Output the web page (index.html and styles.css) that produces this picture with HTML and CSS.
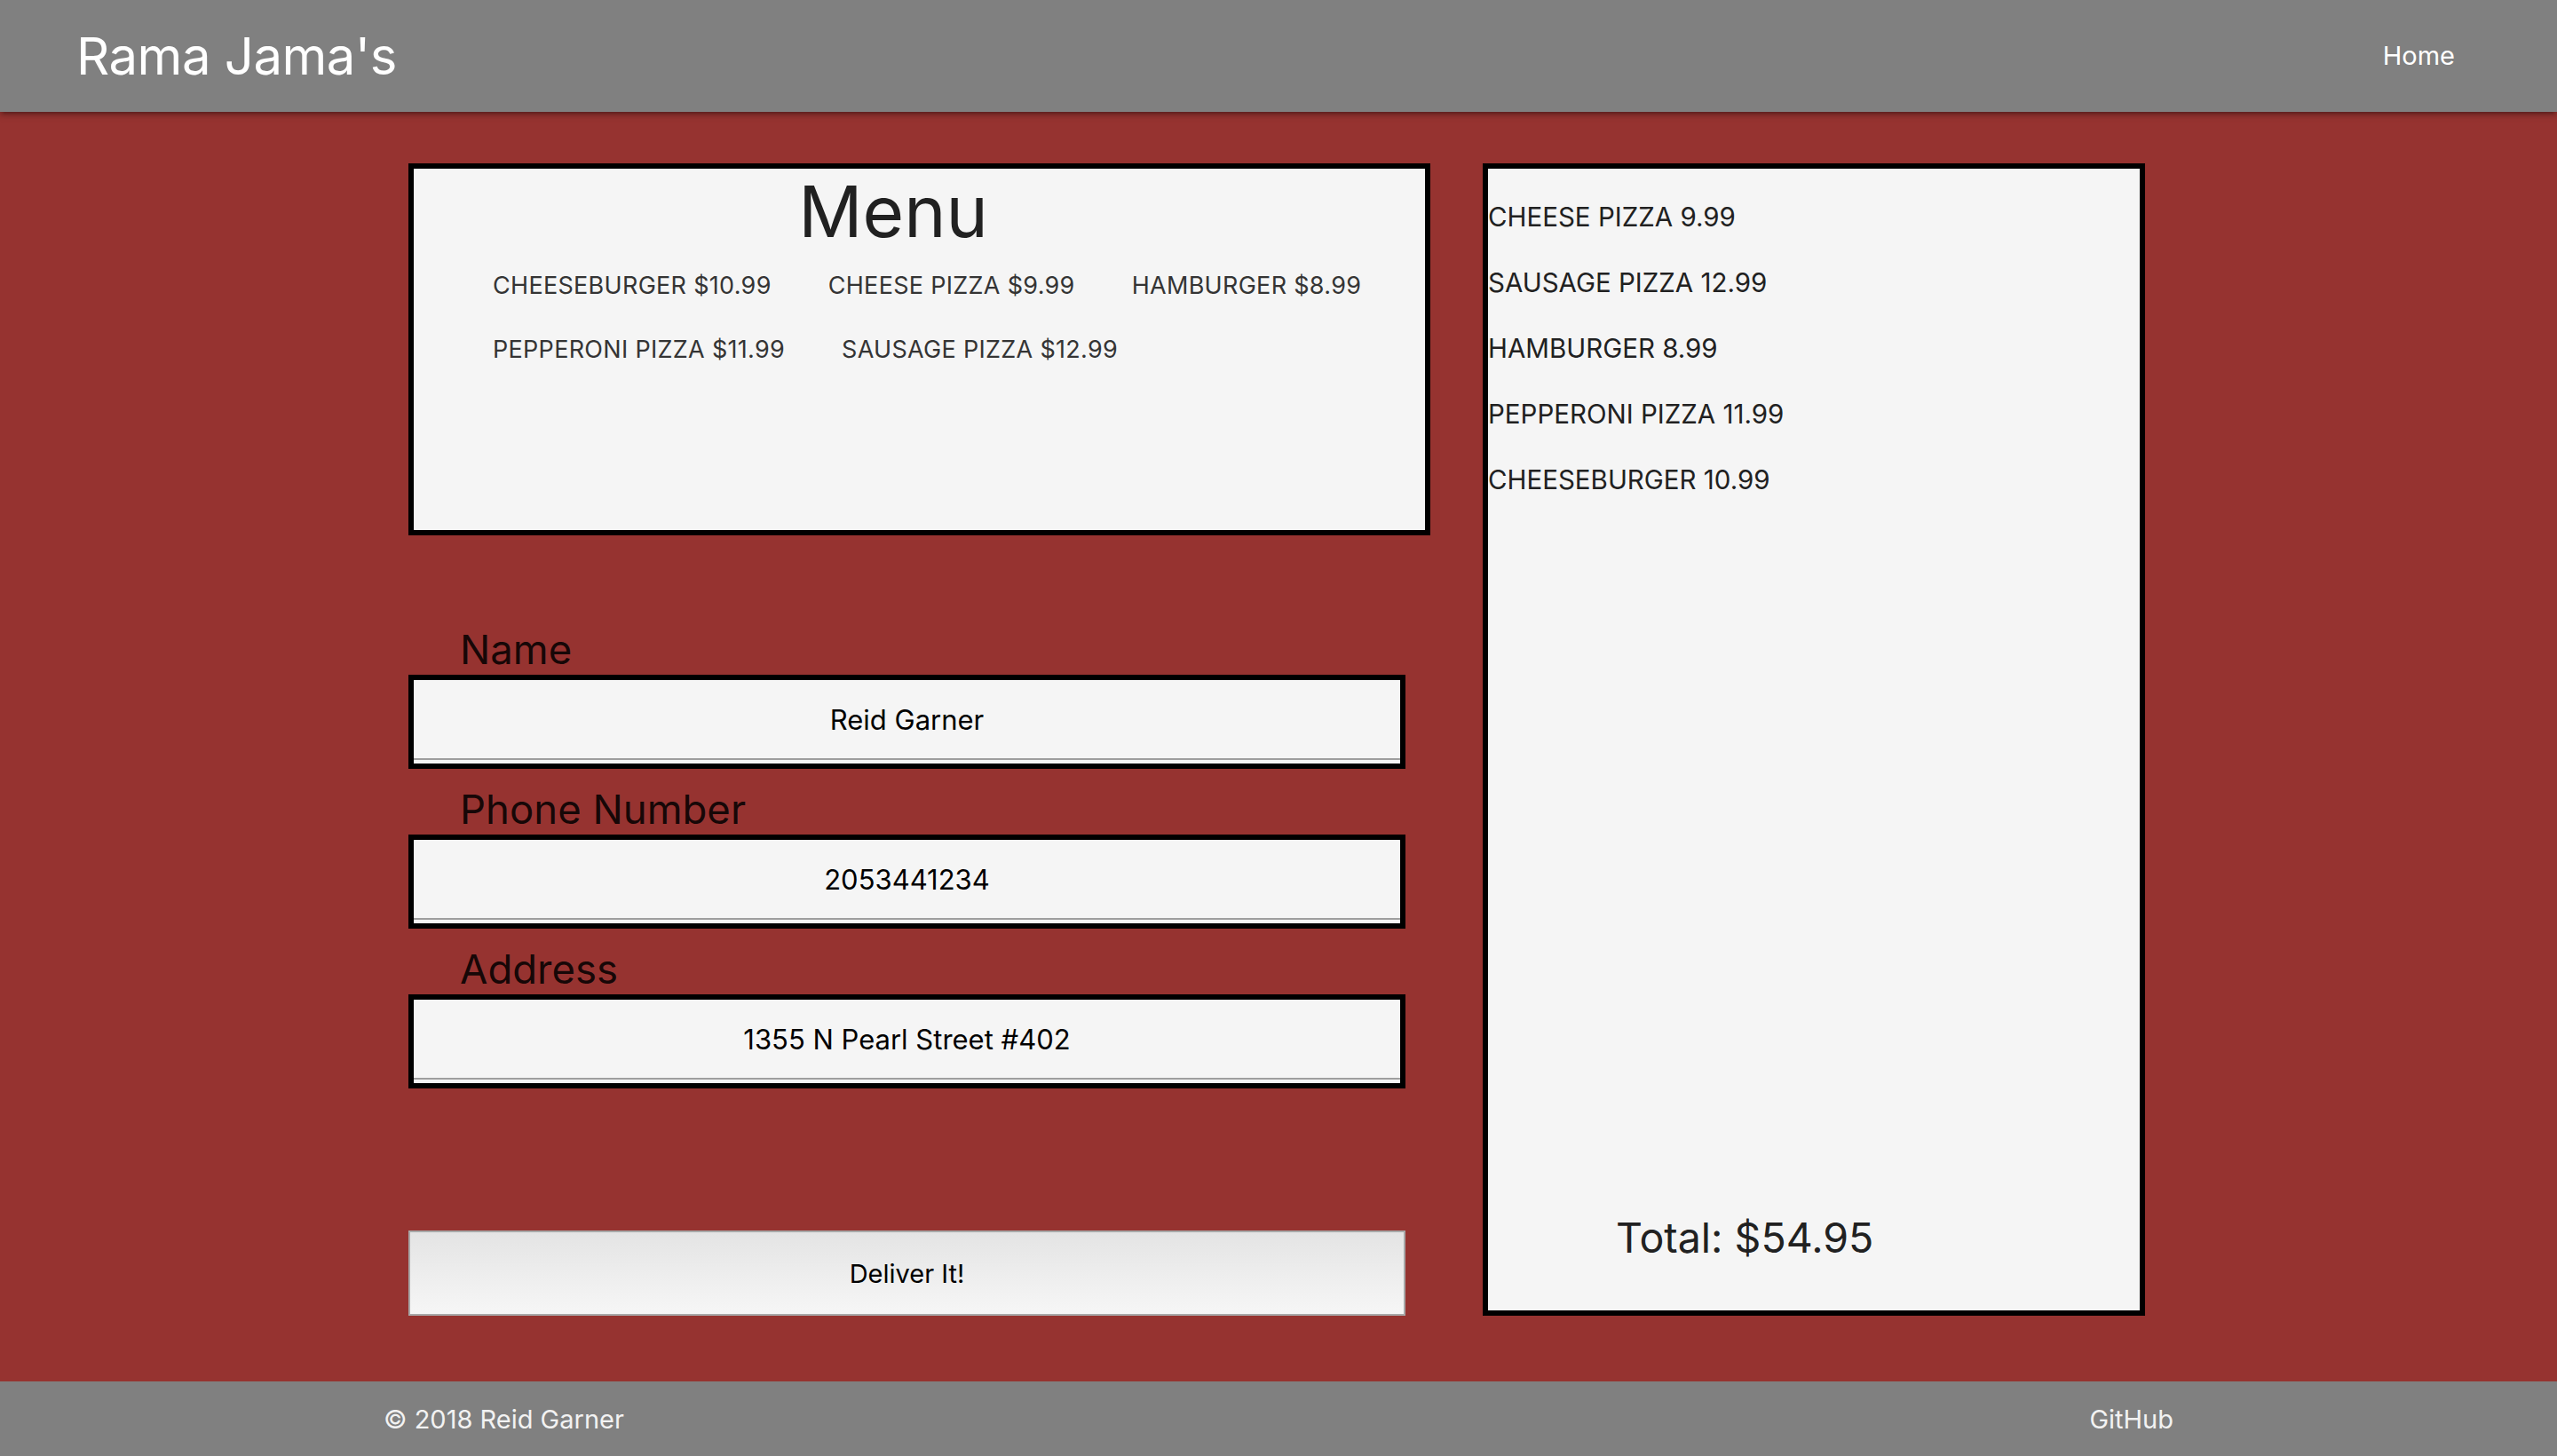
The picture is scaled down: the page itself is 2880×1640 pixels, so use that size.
FILE: index.html
```html
<!DOCTYPE html>
<html lang="en">
<head>
<meta charset="utf-8">
<title>Rama Jama's</title>
<link rel="stylesheet" href="styles.css">
</head>
<body>
<header class="nav">
  <a class="brand" href="#">Rama Jama's</a>
  <ul class="nav-links">
    <li><a class="nav-link" href="#">Home</a></li>
  </ul>
</header>
<main class="main">
  <div class="content">
    <div class="left">
      <section class="menu-box">
        <h3 class="menu-title">Menu</h3>
        <div class="menu-items">
          <a class="menu-item" href="#">CHEESEBURGER $10.99</a>
          <a class="menu-item" href="#">CHEESE PIZZA $9.99</a>
          <a class="menu-item" href="#">HAMBURGER $8.99</a>
          <a class="menu-item" href="#">PEPPERONI PIZZA $11.99</a>
          <a class="menu-item" href="#">SAUSAGE PIZZA $12.99</a>
        </div>
      </section>
      <form class="order-form">
        <div class="field">
          <label class="field-label" for="name">Name</label>
          <div class="field-box"><input class="field-input" id="name" type="text" value="Reid Garner"></div>
        </div>
        <div class="field">
          <label class="field-label" for="phone">Phone Number</label>
          <div class="field-box"><input class="field-input" id="phone" type="text" value="2053441234"></div>
        </div>
        <div class="field">
          <label class="field-label" for="address">Address</label>
          <div class="field-box"><input class="field-input" id="address" type="text" value="1355 N Pearl Street #402"></div>
        </div>
        <button class="deliver-btn" type="button">Deliver It!</button>
      </form>
    </div>
    <aside class="order-box">
      <div class="order-list">
        <p class="order-item">CHEESE PIZZA 9.99</p>
        <p class="order-item">SAUSAGE PIZZA 12.99</p>
        <p class="order-item">HAMBURGER 8.99</p>
        <p class="order-item">PEPPERONI PIZZA 11.99</p>
        <p class="order-item">CHEESEBURGER 10.99</p>
      </div>
      <h5 class="order-total">Total: $54.95</h5>
    </aside>
  </div>
</main>
<footer class="footer">
  <div class="footer-inner">
    <span class="copyright">© 2018 Reid Garner</span>
    <a class="footer-link" href="#">GitHub</a>
  </div>
</footer>
</body>
</html>
```

FILE: styles.css
```css
* {
  box-sizing: border-box;
}

html, body {
  margin: 0;
  padding: 0;
}

body {
  font-family: Inter, Roboto, "Liberation Sans", sans-serif;
  color: rgba(0, 0, 0, 0.87);
  width: 2880px;
  height: 1640px;
  display: flex;
  flex-direction: column;
  overflow: hidden;
}

a {
  text-decoration: none;
}

/* ---------- nav ---------- */
.nav {
  position: relative;
  z-index: 2;
  height: 126px;
  flex: 0 0 126px;
  background: #808080;
  display: flex;
  align-items: center;
  justify-content: space-between;
  padding: 0 85px 0 86px;
  box-shadow: 0 4px 4px 0 rgba(0, 0, 0, 0.14), 0 6px 2px -4px rgba(0, 0, 0, 0.12), 0 2px 10px 0 rgba(0, 0, 0, 0.2);
}

.brand {
  color: #ffffff;
  font-size: 58px;
  line-height: 126px;
  letter-spacing: -0.5px;
}

.nav-links {
  list-style: none;
  margin: 0;
  padding: 0;
  display: flex;
}

.nav-link {
  display: block;
  color: #ffffff;
  font-size: 29px;
  line-height: 126px;
  padding: 0 30px;
}

/* ---------- main ---------- */
.main {
  flex: 1 1 auto;
  background: #963330;
  padding: 58px 0 74px;
}

.content {
  width: 2016px;
  margin: 0 auto;
  display: flex;
  align-items: stretch;
}

.left {
  margin-left: 28px;
  width: 1151px;
  display: flex;
  flex-direction: column;
}

.menu-box {
  height: 419px;
  border: 6px solid #000;
  background: #f5f5f5;
}

.menu-title {
  margin: 0;
  padding-right: 59px;
  text-align: center;
  font-size: 80px;
  font-weight: 400;
  line-height: 96px;
  color: #212121;
}

.menu-items {
  display: flex;
  flex-wrap: wrap;
  padding-left: 57px;
}

.menu-item {
  display: block;
  height: 72px;
  line-height: 72px;
  padding: 0 32px;
  font-size: 27px;
  letter-spacing: 0.3px;
  color: #343434;
  white-space: nowrap;
}

.order-form {
  margin: 101px 0 0;
  width: 1123px;
  display: flex;
  flex-direction: column;
}

.field {
  margin-bottom: 18px;
}

.field-label {
  display: block;
  padding-left: 58px;
  font-size: 45.5px;
  line-height: 56px;
  height: 56px;
  color: rgba(0, 0, 0, 0.87);
}

.field-box {
  border: 6px solid #000;
  background: #f5f5f5;
  height: 106px;
}

.field-input {
  display: block;
  width: 100%;
  height: 90px;
  margin: 0 0 4px;
  padding: 0;
  border: none;
  border-bottom: 2px solid #9e9e9e;
  background: transparent;
  font-family: Inter, Roboto, "Liberation Sans", sans-serif;
  font-size: 31px;
  color: #000;
  text-align: center;
  outline: none;
}

.deliver-btn {
  margin-top: 142px;
  height: 96px;
  width: 100%;
  border: 2px solid #a8a8a8;
  background: linear-gradient(#e4e4e4, #f6f6f6);
  font-family: Inter, Roboto, "Liberation Sans", sans-serif;
  font-size: 29px;
  color: #000;
  padding: 0;
}

/* ---------- order ---------- */
.order-box {
  margin-left: 59px;
  width: 746px;
  border: 6px solid #000;
  background: #f5f5f5;
  display: flex;
  flex-direction: column;
  justify-content: space-between;
}

.order-list {
  display: flex;
  flex-direction: column;
  gap: 30px;
  padding-top: 32px;
}

.order-item {
  margin: 0;
  font-size: 29.5px;
  line-height: 44px;
  color: #212121;
}

.order-total {
  margin: 0 0 55px;
  padding-left: 144px;
  font-size: 46.5px;
  font-weight: 400;
  line-height: 54px;
  color: #212121;
}

/* ---------- footer ---------- */
.footer {
  flex: 0 0 84px;
  height: 84px;
  background: #808080;
}

.footer-inner {
  width: 2016px;
  height: 84px;
  margin: 0 auto;
  display: flex;
  align-items: center;
  justify-content: space-between;
  font-size: 29px;
}

.copyright {
  color: #f2f2f2;
}

.footer-link {
  color: #f2f2f2;
}
```
